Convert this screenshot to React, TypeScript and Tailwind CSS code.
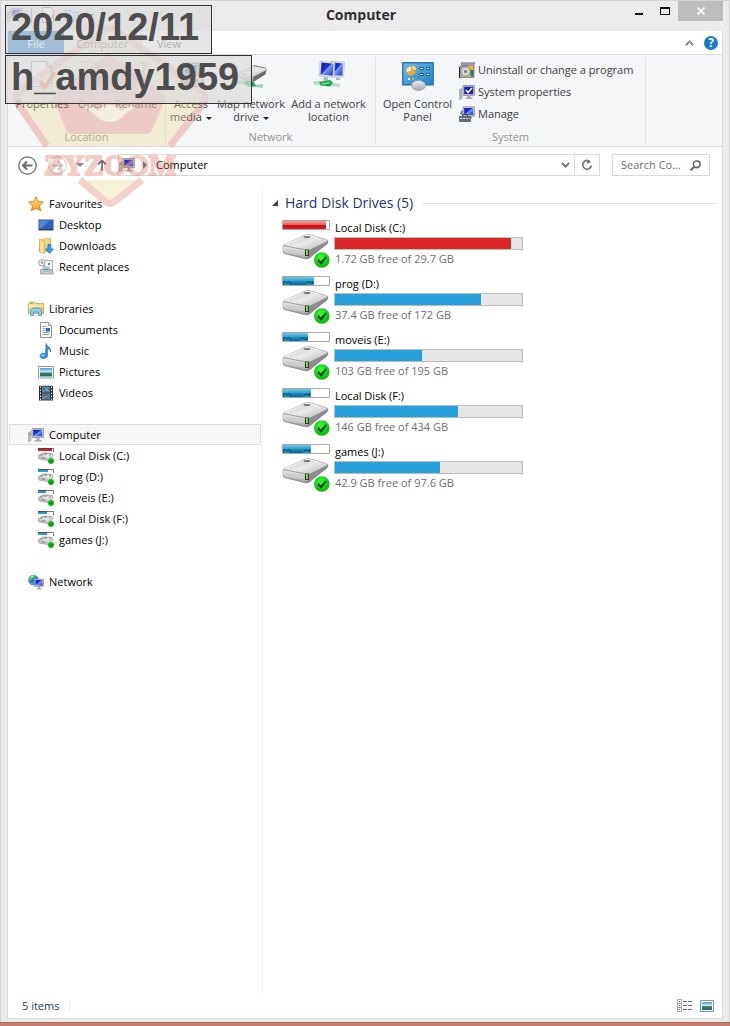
import type { ReactNode } from 'react'
import { useState } from 'react'

type Drive = { name: string; free: string; used: number; cap: number; full?: boolean }

const drives: Drive[] = [
  { name: 'Local Disk (C:)', free: '1.72 GB free of 29.7 GB', used: 94, cap: 43, full: true },
  { name: 'prog (D:)', free: '37.4 GB free of 172 GB', used: 78, cap: 31 },
  { name: 'moveis (E:)', free: '103 GB free of 195 GB', used: 46.5, cap: 25 },
  { name: 'Local Disk (F:)', free: '146 GB free of 434 GB', used: 66, cap: 28 },
  { name: 'games (J:)', free: '42.9 GB free of 97.6 GB', used: 56, cap: 28 },
]

// Shared gradients
const Gradients = () => (
  <svg className="absolute h-0 w-0" aria-hidden="true">
    <defs>
      <linearGradient id="screen" x1="0" y1="0" x2="1" y2="1">
        <stop offset="0" stopColor="#0a12a8" />
        <stop offset="0.45" stopColor="#1c34d8" />
        <stop offset="0.5" stopColor="#7f9cf4" />
        <stop offset="1" stopColor="#1a2cc8" />
      </linearGradient>
      <linearGradient id="metal" x1="0" y1="0" x2="0" y2="1">
        <stop offset="0" stopColor="#f4f4f4" />
        <stop offset="1" stopColor="#a2a2a4" />
      </linearGradient>
      <linearGradient id="metalTop" x1="0" y1="0" x2="1" y2="1">
        <stop offset="0" stopColor="#b9b9bb" />
        <stop offset="0.5" stopColor="#e9e9ea" />
        <stop offset="1" stopColor="#b4b4b6" />
      </linearGradient>
      <linearGradient id="redCap" x1="0" y1="0" x2="0" y2="1">
        <stop offset="0" stopColor="#f79a9a" />
        <stop offset="0.45" stopColor="#f06060" />
        <stop offset="0.5" stopColor="#cf0a12" />
        <stop offset="1" stopColor="#e01c20" />
      </linearGradient>
      <linearGradient id="blueCap" x1="0" y1="0" x2="0" y2="1">
        <stop offset="0" stopColor="#6cc4de" />
        <stop offset="0.45" stopColor="#35a8cc" />
        <stop offset="0.5" stopColor="#0d84b0" />
        <stop offset="1" stopColor="#1a9cc4" />
      </linearGradient>
      <linearGradient id="folder" x1="0" y1="0" x2="1" y2="1">
        <stop offset="0" stopColor="#fbeeb0" />
        <stop offset="1" stopColor="#e3bd58" />
      </linearGradient>
      <linearGradient id="star" x1="0" y1="0" x2="0" y2="1">
        <stop offset="0" stopColor="#ffe98a" />
        <stop offset="1" stopColor="#f79a1c" />
      </linearGradient>
      <linearGradient id="sky" x1="0" y1="0" x2="0" y2="1">
        <stop offset="0" stopColor="#3f9be0" />
        <stop offset="0.5" stopColor="#dff1fb" />
        <stop offset="0.55" stopColor="#3d8a58" />
        <stop offset="1" stopColor="#1d5f78" />
      </linearGradient>
      <linearGradient id="panel" x1="0" y1="0" x2="1" y2="1">
        <stop offset="0" stopColor="#6cbcec" />
        <stop offset="1" stopColor="#2380c8" />
      </linearGradient>
      <radialGradient id="tick" cx="0.45" cy="0.35" r="0.65">
        <stop offset="0" stopColor="#3dff3d" />
        <stop offset="1" stopColor="#04b008" />
      </radialGradient>
    </defs>
  </svg>
)

const Icon = ({ size = 16, children }: { size?: number; children: ReactNode }) => (
  <svg width={size} height={size} viewBox={`0 0 ${size} ${size}`} className="shrink-0" aria-hidden="true">
    {children}
  </svg>
)

const ComputerIcon = () => (
  <Icon>
    <path d="M.5 5.500 3 4.500v9l-2.500 1z" fill="#c4c8c4" stroke="#8a908a" strokeWidth=".6" />
    <path d="M1 6.500h1.500v1.500H1z" fill="#35c335" />
    <path d="M4 1.500h11.500v9H4z" fill="#c9cbd0" stroke="#8f939c" strokeWidth=".8" />
    <path d="M5.200 2.800h9v6.400h-9z" fill="url(#screen)" />
    <path d="M8.500 11h3v2h-3zM6.500 13h7v1.500h-7z" fill="#a9abb0" />
  </Icon>
)

const NetworkIcon = () => (
  <Icon>
    <circle cx="5.500" cy="6" r="5.200" fill="#2b7fd0" />
    <path d="M1.500 3C3 .8 6 .6 8 1.500 7 3 6.500 4 4.500 4.200 3.500 5.500 3 6.500 1 6zM2 8.500l3 .5v2z" fill="#62cf4a" />
    <path d="M3 2.500c1-.8 2-.9 3-.7L4 3.500z" fill="#d5f6d8" />
    <path d="M6.500 5h9v7.500h-9z" fill="#c9cbd0" stroke="#7f8596" strokeWidth=".6" />
    <path d="M7.500 6h7v5.500h-7z" fill="url(#screen)" />
    <path d="M10 12.500h2v2h-2zM8.500 14.300h5v1.200h-5z" fill="#a9abb0" />
  </Icon>
)

const StarIcon = () => (
  <Icon>
    <path d="m8 .8 2.200 4.700 5.200.6-3.900 3.500 1.100 5.200L8 12.200l-4.600 2.600 1.100-5.200L.6 6.100l5.200-.6z" fill="url(#star)" stroke="#e2761a" strokeWidth=".9" />
  </Icon>
)

const DesktopIcon = () => (
  <Icon>
    <path d="M.5 2.500h15v11H.5z" fill="#3b5c8c" stroke="#9aa7b8" />
    <path d="M1.500 3.500h13v8h-13z" fill="#2f62be" />
    <path d="M1.500 3.500H12L3 11.500H1.500z" fill="#4c86de" />
    <path d="M1.500 12h13v1h-13z" fill="#27405f" />
  </Icon>
)

const DownloadsIcon = () => (
  <Icon>
    <path d="M1.500 1.500 7 .8h5.500v13H1.500z" fill="url(#folder)" stroke="#c9a548" strokeWidth=".7" />
    <path d="m1.500 1.500 5 1.500v12.500l-5-1.700z" fill="#f6df92" stroke="#c9a548" strokeWidth=".6" />
    <path d="M10 6.500h3v4.500h2.500l-4 4.500-4-4.500H10z" fill="#3b9fe6" stroke="#1a68b4" strokeWidth=".7" />
  </Icon>
)

const RecentIcon = () => (
  <Icon>
    <path d="M6.500 1.500h8v10h-8z" fill="#f4f7fa" stroke="#8b95a0" strokeWidth=".7" />
    <path d="M2.500 10.500h11l2 4.500h-13z" fill="#c5c9ce" stroke="#8b8f96" strokeWidth=".7" />
    <path d="M5 8h6v4H5z" fill="#dfe9f2" stroke="#7d93a8" strokeWidth=".7" />
    <path d="M10 4h2v2h-2z" fill="#3a8de0" />
    <path d="M6 9.500h4v1.500H6z" fill="#3aa6b4" />
    <circle cx="3.800" cy="3.800" r="3.200" fill="#f0f2f4" stroke="#8f959c" strokeWidth=".9" />
    <path d="M3.800 2v2h1.700" stroke="#55606c" strokeWidth=".8" fill="none" />
  </Icon>
)

const LibrariesIcon = () => (
  <Icon>
    <path d="M.5 2.500 1.500 1h5l1 1.500h8v10H.5z" fill="url(#folder)" stroke="#c4a046" strokeWidth=".8" />
    <path d="M2 1.800h3v1H2z" fill="#3fbf3f" />
    <path d="M.8 5h14.400" stroke="#fff6d0" />
    <path d="M2.500 14.500v-5l2-2.500h7l2 2.500v5h-3v-3.500h-5v3.500z" fill="#8fcdf0" stroke="#3f93c8" strokeWidth=".8" />
  </Icon>
)

const DocumentIcon = () => (
  <Icon>
    <path d="M2.500.5h8l3 3v12h-11z" fill="#fdfdfd" stroke="#8b9096" />
    <path d="M10.500.5v3h3" fill="#dde2e8" stroke="#8b9096" strokeWidth=".8" />
    <path d="M4.500 4.500h4M4.500 6.500h3M4.500 8.500h3M4.500 10.500h7M4.500 12.500h7" stroke="#8ca0c0" />
    <path d="M8 6h4v3.500H8z" fill="#2d6cc8" />
  </Icon>
)

const MusicIcon = () => (
  <Icon>
    <path d="M8 .5c.5 2.800 5.500 3.500 4.500 8.500-.4-2-1.500-3-3-3.300V12.500c0 2-2 3-4 3s-3.500-.9-3.500-2.500 1.700-2.700 3.500-2.700c.9 0 1.500.2 2 .5z" fill="#2d96dc" stroke="#1767ab" strokeWidth=".6" />
    <ellipse cx="4.800" cy="12.400" rx="1.700" ry="1" fill="#9ad6f7" />
  </Icon>
)

const PictureIcon = () => (
  <Icon>
    <path d="M.5 2.500h15v11.500H.5z" fill="#fff" stroke="#8c97a3" />
    <path d="M2 4h12v8.500H2z" fill="url(#sky)" />
  </Icon>
)

const VideoIcon = () => (
  <Icon>
    <path d="M1 .8h14v14.700H1z" fill="#2b2f34" />
    <path d="M4 1.500h8v6H4zM4 8.500h8v6H4z" fill="#3f8fc0" />
    <path d="m5 2 3 2.500L11 2v4.500H6zM5 10l3-1.500 3.500 3L8 14z" fill="#9a4a34" />
    <path d="M6 5.500 9 3l2 3zM6 13l2-2.500 2 1z" fill="#56b8e8" />
    <path d="M2.500 1.500v14M13.500 1.500v14" stroke="#e8ecef" strokeDasharray="1.500 1.500" />
  </Icon>
)

const SmallDriveIcon = ({ full, cap }: { full?: boolean; cap: number }) => (
  <Icon>
    <path d="M0 0h16v3H0z" fill="#fff" />
    <path d={`M0 0h${Math.round(cap / 3)}v3H0z`} fill={full ? '#d8222a' : '#2a9cc8'} />
    <path d="M0 .5h15.500V4" stroke="#3a3a3a" strokeOpacity=".7" fill="none" />
    <path d="m0 8 5-3 9 .5 1 2-4.500 5L1 11z" fill="url(#metalTop)" stroke="#77777a" strokeWidth=".6" />
    <path d="m0 8.200 9.500 1.500v3L1 11z" fill="#bdbdc0" />
    <path d="M2.500 7h2M6 6h3M4 10h3M11 7h2" stroke="#6f6f74" strokeWidth=".8" />
    <circle cx="13" cy="13" r="3" fill="#10bb14" />
    <path d="m11.700 13 1 1.100 1.700-2" stroke="#064d08" strokeWidth=".8" fill="none" />
  </Icon>
)

const DriveIcon = ({ full, cap }: { full?: boolean; cap: number }) => (
  <Icon size={48}>
    <path d="M.5.5h47v9H.5z" fill="#fff" stroke="#a8a8a8" />
    <path d={`M1 1h${cap}v8H1z`} fill={full ? 'url(#redCap)' : 'url(#blueCap)'} />
    {!full && <path d={`M1.500 8V5.500h2l1 2 3-2 1 3M${cap - 6} 8l1-2.500 3 2 1.500-2V8M9 8h${cap - 16}`} stroke="#0a4488" fill="none" />}
    <path d="M1 26 24 15.500q2-1 4-.5l17 5q2 .6 1 3L28 38q-2 1.500-5 1L3 34q-2-.5-2-2z" fill="#88888c" />
    <path d="M1 25.500 23 15q2.500-1 5-.3l16.500 4.800q2 .8.200 2.200L27 30.500z" fill="url(#metalTop)" stroke="#909094" strokeWidth=".5" />
    <path d="M3 25 24 15.800q2-.7 4-.2l8 2.400" stroke="#fafafa" strokeWidth=".9" fill="none" />
    <path d="M1 25.700 26.500 30.500 26 37.600q-1.500 1-3.500.5L3 33.500q-2-.5-2-2.500z" fill="url(#metal)" stroke="#8d8d91" strokeWidth=".5" />
    <path d="m27 30.500 18.500-9q.8 1.500-.5 3L28.500 36.500q-1 .9-2.500 1z" fill="#8b8b90" />
    <path d="m4 28.500 17 3.800v3L4 31.500z" fill="#cfcfd2" />
    <ellipse cx="25" cy="17" rx="3.500" ry="1.100" fill="#77777b" />
    <path d="M23 29.500h4V36h-4z" fill="#333" />
    <path d="M24 30h2v5h-2z" fill="#62ea1e" />
    <circle cx="39.800" cy="40" r="7.800" fill="url(#tick)" />
    <path d="m36 40 3 3.200 5-6" stroke="#073b08" strokeWidth="2" fill="none" />
  </Icon>
)

const PropertiesIcon = () => (
  <Icon size={32}>
    <path d="M5.500 2.500h15l5 5v20h-20z" fill="#fff" stroke="#8f8f8f" />
    <path d="M20.500 2.500v5h5" fill="#eee" stroke="#8f8f8f" />
    <path d="m14 22 5 6L29 13" stroke="#f0662a" strokeWidth="4" fill="none" />
  </Icon>
)

const OpenIcon = () => (
  <Icon size={32}>
    <path d="M5.500 2.500h12l5 5v20h-17z" fill="#f6f6f6" stroke="#9c9c9c" />
    <path d="M5 28V14h6l2 2h12v12z" fill="#c9c9c9" stroke="#a5a5a5" />
    <path d="m22 14 6 6h-3.500v6h-5v-6H16z" fill="#8e8e8e" />
  </Icon>
)

const RenameIcon = () => (
  <Icon size={32}>
    <path d="M2.500 11.500h20v9h-20z" fill="#f3f3f3" stroke="#9c9c9c" />
    <path d="M5 14h9v4H5z" fill="#b5b5b5" />
    <path d="M20 4q4 0 4 3v17q0 3-4 3M28 4q-4 0-4 3v17q0 3 4 3" stroke="#7e7e7e" strokeWidth="1.500" fill="none" />
  </Icon>
)

const AccessMediaIcon = () => (
  <Icon size={32}>
    <path d="M8 4h16v12H8z" fill="#b8bcc2" stroke="#777" />
    <path d="M10 6h12v8H10z" fill="#3470b8" />
    <path d="M13 7h3v3h-3zM18 9h3v3h-3z" fill="#5fc0e8" />
    <path d="M5 20q0-5 8-5h9l-4 5q-6 0-7 3l7 1v4l-9-1q-4-2-4-7z" fill="#a9abae" stroke="#7a7c80" />
    <circle cx="22" cy="22" r="6" fill="#d5d7da" stroke="#888" />
    <circle cx="22" cy="22" r="2" fill="#888" />
  </Icon>
)

const MapDriveIcon = () => (
  <Icon size={32}>
    <path d="m4 14 13-7q2-1 4-.5l9 2q2 1 1.500 3l-1 4L18 23 6 20q-2-1-2-3z" fill="#6e6e72" />
    <path d="m4 13.500 13-7 14 3q1 .8-.5 2L18 18z" fill="url(#metalTop)" />
    <path d="m4 14 14 4v4.500L6 20q-2-1-2-3z" fill="url(#metal)" />
    <path d="M15 18.500h2v3h-2z" fill="#48d21e" />
    <path d="m1 22 8-1 10 5 9-1v4l-9-1-10-3-8 1z" fill="#9fcfb4" />
    <path d="m10 22 8 0 3 5-7 1-5-3z" fill="#18a458" />
  </Icon>
)

const AddLocationIcon = () => (
  <Icon size={32}>
    <path d="m17 2 14.500 1-1 15-13.500 0z" fill="#e2e4e8" stroke="#b4b8c2" strokeWidth=".6" />
    <path d="m19 3.500 11 1-.8 12-10.200 0z" fill="url(#screen)" />
    <path d="m7 2 15 1.500-1 15-15-1.500z" fill="#e2e4e8" stroke="#b4b8c2" strokeWidth=".6" />
    <path d="m8.500 3.500 12 1.200-.8 12L7.500 15.500z" fill="url(#screen)" />
    <path d="m11 18 4 .5v3h-5zM23 18.500h4v2.500h-4z" fill="#b2b6be" />
    <path d="M0 22q8-1 14 1l13 2v3q-8 0-14-2L1 26z" fill="#bcdcc8" />
    <path d="m6 23 11-2 3 3-3 3.500-9-1z" fill="#14a344" />
    <path d="m8 24 8-1 2 1-8 2z" fill="#6fdc90" />
  </Icon>
)

const ControlPanelIcon = () => (
  <Icon size={32}>
    <path d="M.8 3.800h30.400v22H.8z" fill="url(#panel)" stroke="#2b74ac" strokeWidth="1.400" />
    <circle cx="9" cy="12" r="4.500" fill="#f6a52c" />
    <path d="M9 12V7.500A4.500 4.500 0 0 0 4.600 13z" fill="#f7f0dc" />
    <path d="M10 11V6.500a4.500 4.500 0 0 1 4.500 4.500z" fill="#ffe0a0" stroke="#e77f12" strokeWidth=".6" />
    <path d="M17.500 8.500h4v2h-4zM24.500 8.500h3v2h-3zM17.500 14.500h4v2h-4zM24.500 14.500h3v2h-3z" fill="#fff" stroke="#14609c" />
    <path d="M6 19h2v2H6z" fill="#fff" />
    <path d="M10 19h2v2h-2z" fill="#f4a22a" />
    <ellipse cx="16.500" cy="26.500" rx="7" ry="5" fill="url(#metal)" stroke="#8d9196" strokeWidth=".6" />
  </Icon>
)

const UninstallIcon = () => (
  <Icon>
    <path d="M2 .8h14l-1 2.700H3z" fill="#9a9cc8" stroke="#6c6e94" strokeWidth=".6" />
    <path d="M1 4h14v11.500H1z" fill="#b9b6a4" stroke="#666" strokeWidth=".7" />
    <path d="M9 3.500h5v4H9z" fill="#f0b830" />
    <path d="M11.500 8h3v6.500h-3z" fill="#2f7a48" />
    <circle cx="6.500" cy="9.500" r="4.700" fill="#d5d7d3" stroke="#777c75" strokeWidth=".8" />
    <circle cx="6.500" cy="9.500" r="1.500" fill="#70766e" />
    <path d="M.5 5v11" stroke="#222" />
  </Icon>
)

const SystemIcon = () => (
  <Icon>
    <path d="M.5 5.500 3 4.500v10l-2.500 1z" fill="#c4c8c4" stroke="#8a908a" strokeWidth=".6" />
    <path d="M1 6.500h1.500v6H1z" fill="#8fc38f" />
    <path d="M4 1.500h11.500v10H4z" fill="#c9cbd0" stroke="#8f939c" strokeWidth=".8" />
    <path d="M5.200 2.700h9v7.500h-9z" fill="#1220c4" />
    <path d="m7 6 2 2.500 4-4.500" stroke="#fff" strokeWidth="1.500" fill="none" />
    <path d="M8.500 12h3v1.500h-3zM6.500 13.500h7V15h-7z" fill="#a9abb0" />
  </Icon>
)

const ManageIcon = () => (
  <Icon>
    <path d="M4 .8h11.500v9.500H4z" fill="#c9cbd0" stroke="#8f939c" strokeWidth=".8" />
    <path d="M5.200 2h9v7h-9z" fill="url(#screen)" />
    <path d="M10 10.500h3v2h-3z" fill="#999ca3" />
    <path d="M.5 10.500h11v5H.5z" fill="#5e7078" stroke="#36444a" strokeWidth=".6" />
    <path d="M3.500 10.500V8.500h5v2" stroke="#36444a" fill="none" />
    <path d="M1 12.500h10" stroke="#cfd8dc" strokeDasharray="2 1" />
    <path d="M1.500 6 3.500 4v4.500h-2z" fill="#5a6a8c" />
  </Icon>
)

const Caret = () => <span className="ml-1 inline-block border-x-3 border-t-3 border-x-transparent border-t-[#222] align-middle" />

const BigButton = ({ icon, lines, menu, muted, className }: { icon: ReactNode; lines: string[]; menu?: boolean; muted?: boolean; className: string }) => (
  <button type="button" className={`flex shrink-0 flex-col items-center whitespace-nowrap text-[11px] leading-[13px] ${muted ? 'text-[#8c8c8c]' : 'text-[#3c3c3c]'} ${className}`}>
    <span className={`mb-1.5 ${muted ? 'opacity-50' : ''}`}>{icon}</span>
    {lines.map((line, i) => (
      <span key={line}>
        {line}
        {menu && i === lines.length - 1 && <Caret />}
      </span>
    ))}
  </button>
)

const RibbonGroup = ({ label, className, children }: { label: string; className: string; children: ReactNode }) => (
  <section className={`flex shrink-0 flex-col ${className}`}>
    <div className="flex flex-1 pt-1">{children}</div>
    <div className="pb-px text-center text-[11px] leading-4 text-[#929292]">{label}</div>
  </section>
)

const Divider = () => <div className="my-0.5 w-px shrink-0 bg-[#e2e3e4]" />

const systemTools = [
  { icon: <UninstallIcon />, label: 'Uninstall or change a program' },
  { icon: <SystemIcon />, label: 'System properties' },
  { icon: <ManageIcon />, label: 'Manage' },
]

const Ribbon = () => (
  <div className="flex h-[93px] overflow-hidden border-y border-[#dadbdc] bg-[#f5f6f7]">
    <RibbonGroup label="Location" className="w-[157px]">
      <BigButton icon={<PropertiesIcon />} lines={['Properties']} className="w-[68px]" />
      <BigButton icon={<OpenIcon />} lines={['Open']} muted className="w-8" />
      <BigButton icon={<RenameIcon />} lines={['Rename']} muted className="w-14" />
    </RibbonGroup>
    <Divider />
    <RibbonGroup label="Network" className="w-[209px]">
      <BigButton icon={<AccessMediaIcon />} lines={['Access', 'media']} menu className="w-[50px]" />
      <BigButton icon={<MapDriveIcon />} lines={['Map network', 'drive']} menu className="w-[70px]" />
      <BigButton icon={<AddLocationIcon />} lines={['Add a network', 'location']} className="w-[85px]" />
    </RibbonGroup>
    <Divider />
    <RibbonGroup label="System" className="w-[269px]">
      <BigButton icon={<ControlPanelIcon />} lines={['Open Control', 'Panel']} className="w-[83px]" />
      <div className="flex flex-col">
        {systemTools.map(tool => (
          <button key={tool.label} type="button" className="flex h-[22px] items-center gap-[3px] whitespace-nowrap text-[11px] text-[#3c3c3c]">
            {tool.icon}
            {tool.label}
          </button>
        ))}
      </div>
    </RibbonGroup>
    <Divider />
  </div>
)

const TitleBar = () => (
  <header className="grid h-[30px] grid-cols-[1fr_auto_1fr] items-start">
    <div className="flex items-center gap-2 pt-1.5">
      <ComputerIcon />
      <span className="h-4 w-px bg-[#999]" />
      <Icon>
        <path d="M2.500.5h8l3 3v12h-11z" fill="#fff" stroke="#888" />
        <path d="m6 11 3 3 5-7" stroke="#f0662a" strokeWidth="2" fill="none" />
      </Icon>
      <Icon>
        <path d="M1.500 3.500h6l1 1.500h6v9h-13z" fill="#bcd6f2" stroke="#7fa6d2" />
      </Icon>
      <span className="border-x-3 border-t-3 border-x-transparent border-t-[#333]" />
      <span className="h-4 w-px bg-[#999]" />
    </div>
    <h1 className="pt-1 pr-2 text-sm leading-5 font-bold text-[#2e2e2e]">Computer</h1>
    <div className="flex justify-end">
      <button type="button" aria-label="Minimise" className="flex h-5 w-[27px] items-center justify-center">
        <span className="mt-1.5 h-0.5 w-2 bg-[#111]" />
      </button>
      <button type="button" aria-label="Maximise" className="flex h-5 w-[26px] items-center justify-center">
        <span className="h-2 w-2.5 border border-t-2 border-[#111]" />
      </button>
      <button type="button" aria-label="Close" className="flex h-5 w-[45px] items-center justify-center bg-[#bcbcbc]">
        <svg width="8" height="8" viewBox="0 0 8 8" stroke="#fff" strokeWidth="1.700">
          <path d="m.5.5 7 7m0-7-7 7" />
        </svg>
      </button>
    </div>
  </header>
)

const Tabs = () => (
  <div className="flex h-[23px] items-stretch bg-white text-[11px]">
    <button type="button" className="w-14 bg-[#1979ca] pt-[3px] text-white">File</button>
    <button type="button" className="w-[78px] border-r border-[#dadbdc] bg-[#f5f6f7] pt-[3px] text-[#444]">Computer</button>
    <button type="button" className="w-[54px] pt-[3px] text-[#444]">View</button>
    <div className="ml-auto flex items-center gap-2.5 pr-1">
      <button type="button" aria-label="Minimise the ribbon">
        <svg width="9" height="6" viewBox="0 0 9 6" fill="none" stroke="#8b8b8b" strokeWidth="2">
          <path d="M.8 5.200 4.500 1.500l3.700 3.700" />
        </svg>
      </button>
      <button type="button" aria-label="Help" className="h-3.5 w-3.5 rounded-full bg-[#1979ca] text-xs leading-3.5 font-bold text-white">?</button>
    </div>
  </div>
)

const AddressRow = () => (
  <div className="flex items-center pt-[7px] pr-3 pl-2.5">
    <button type="button" aria-label="Back" className="w-[30px]">
      <svg width="19" height="19" viewBox="0 0 19 19" fill="none" stroke="#6a6a6a">
        <circle cx="9.500" cy="9.500" r="8.700" strokeWidth="1.300" />
        <path d="M14.500 9.500H5.500M9 5.500l-4 4 4 4" strokeWidth="2" />
      </svg>
    </button>
    <button type="button" aria-label="Forward" className="w-7">
      <svg width="19" height="19" viewBox="0 0 19 19" fill="none" stroke="#c2c2c2">
        <circle cx="9.500" cy="9.500" r="8.700" />
        <path d="M4.500 9.500h9M10 5.500l4 4-4 4" strokeWidth="2" />
      </svg>
    </button>
    <button type="button" aria-label="Recent locations" className="w-[21px]">
      <span className="block w-0 border-x-4 border-t-4 border-x-transparent border-t-[#8a8a8a]" />
    </button>
    <button type="button" aria-label="Up" className="w-[21px]">
      <svg width="10" height="12" viewBox="0 0 10 12" fill="none" stroke="#6a6a6a" strokeWidth="1.700">
        <path d="M5 12V1.500M1 5.500l4-4 4 4" />
      </svg>
    </button>
    <div className="flex h-[22px] min-w-0 flex-1 items-center border border-[#d9d9d9] text-[11px]">
      <ComputerIcon />
      <span className="mr-[9px] ml-2 h-0 w-0 border-y-4 border-l-4 border-y-transparent border-l-[#6a6a6a]" />
      <span className="flex-1 leading-5 text-black">Computer</span>
      <button type="button" aria-label="Previous locations" className="px-1">
        <svg width="9" height="6" viewBox="0 0 9 6" fill="none" stroke="#666" strokeWidth="1.800">
          <path d="m1 1 3.500 3.700L8 1" />
        </svg>
      </button>
      <button type="button" aria-label="Refresh" className="flex h-full w-[25px] items-center justify-center border-l border-[#d9d9d9]">
        <svg width="12" height="12" viewBox="0 0 12 12" fill="none" stroke="#777" strokeWidth="1.700">
          <path d="M8.500 2.300A4.300 4.300 0 1 0 10.300 6.500" />
          <path d="M6.500.2 10 3.200 6 5z" fill="#777" stroke="none" />
        </svg>
      </button>
    </div>
    <label className="ml-3 flex h-[22px] w-[98px] items-center border border-[#d9d9d9] pr-2 pl-2 text-[11px]">
      <input aria-label="Search Computer" placeholder="Search Co..." className="min-w-0 flex-1 placeholder:text-[#6d6d6d] focus:outline-none" />
      <svg width="11" height="11" viewBox="0 0 11 11" fill="none" stroke="#666" strokeWidth="1.600">
        <circle cx="6.700" cy="4.300" r="3.300" />
        <path d="M4.200 6.800.6 10.400" strokeWidth="2" />
      </svg>
    </label>
  </div>
)

type NavItem = { label: string; icon: ReactNode }
const navGroups: { head: NavItem; items: NavItem[] }[] = [
  {
    head: { label: 'Favourites', icon: <StarIcon /> },
    items: [
      { label: 'Desktop', icon: <DesktopIcon /> },
      { label: 'Downloads', icon: <DownloadsIcon /> },
      { label: 'Recent places', icon: <RecentIcon /> },
    ],
  },
  {
    head: { label: 'Libraries', icon: <LibrariesIcon /> },
    items: [
      { label: 'Documents', icon: <DocumentIcon /> },
      { label: 'Music', icon: <MusicIcon /> },
      { label: 'Pictures', icon: <PictureIcon /> },
      { label: 'Videos', icon: <VideoIcon /> },
    ],
  },
  {
    head: { label: 'Computer', icon: <ComputerIcon /> },
    items: drives.map(d => ({ label: d.name, icon: <SmallDriveIcon full={d.full} cap={d.cap} /> })),
  },
  { head: { label: 'Network', icon: <NetworkIcon /> }, items: [] },
]

const NavPane = () => {
  const [selected, setSelected] = useState('Computer')
  const row = (item: NavItem, indent: string) => (
    <button
      key={item.label}
      type="button"
      onClick={() => setSelected(item.label)}
      className={`flex h-[21px] w-full items-center gap-[5px] border text-[11px] text-black ${indent} ${selected === item.label ? 'border-[#dedede] bg-[#f7f7f7]' : 'border-transparent'}`}
    >
      {item.icon}
      <span className="pt-px">{item.label}</span>
    </button>
  )
  return (
    <nav className="flex w-[255px] shrink-0 flex-col gap-[21px] border-r border-[#f2f2f2] pt-2 pr-px pl-px">
      {navGroups.map(group => (
        <div key={group.head.label}>
          {row(group.head, 'pl-[18px]')}
          {group.items.map(item => row(item, 'pl-7'))}
        </div>
      ))}
    </nav>
  )
}

const DriveRow = ({ drive }: { drive: Drive }) => (
  <li className="flex h-14 items-start gap-1">
    <DriveIcon full={drive.full} cap={drive.cap} />
    <div className="w-[189px]">
      <div className="pl-px text-[11px] leading-4 text-black">{drive.name}</div>
      <div className="mt-px h-[13px] border border-[#bcbcbc] bg-[#e6e6e6]">
        <div className={`h-full ${drive.full ? 'bg-[#da2626]' : 'bg-[#26a0da]'}`} style={{ width: `${drive.used}%` }} />
      </div>
      <div className="pl-px text-[11px] leading-[17px] text-[#6d6d6d]">{drive.free}</div>
    </div>
  </li>
)

const DriveList = () => (
  <main className="min-w-0 flex-1 pt-2 pr-[7px] pl-[9px]">
    <div className="flex h-5 items-center">
      <svg width="6" height="6" viewBox="0 0 6 6" className="shrink-0">
        <path d="M6 0v6H0z" fill="#404040" />
      </svg>
      <h2 className="ml-[7px] text-sm whitespace-nowrap text-[#1e3287]">Hard Disk Drives (5)</h2>
      <span className="ml-2.5 h-px flex-1 bg-[#e2e2e2]" />
    </div>
    <ul className="mt-[7px] pl-2.5">
      {drives.map(d => (
        <DriveRow key={d.name} drive={d} />
      ))}
    </ul>
  </main>
)

const StatusBar = () => (
  <footer className="flex h-[25px] items-center pr-2 pl-3.5 text-[11px] text-[#1e395b]">
    <span className="pt-0.5">5 items</span>
    <span className="ml-2.5 h-3 w-px bg-[#f0f0f0]" />
    <div className="ml-auto flex items-center gap-2">
      <button type="button" aria-label="Details view">
        <svg width="15" height="13" viewBox="0 0 15 13" fill="none" stroke="#8793a5" strokeWidth=".8">
          <path d="M.5.5h4v4h-4zM.5 4.500h4v4h-4zM.5 8.500h4v4h-4z" />
          <path d="M6 2.500h4M11 2.500h4M6 6.500h4M11 6.500h4M6 10.500h4M11 10.500h4" stroke="#596980" strokeWidth="1" />
          <path d="M2 2h1v1H2zM2 10h1v1H2z" fill="#34506e" stroke="none" />
          <path d="M2 6h1v1H2z" fill="#d02020" stroke="none" />
        </svg>
      </button>
      <button type="button" aria-label="Large icons view">
        <svg width="14" height="12" viewBox="0 0 14 12">
          <path d="M.5.5h13v11H.5z" fill="#fff" stroke="#7e93ab" />
          <path d="M2 2h10v8H2z" fill="url(#sky)" />
        </svg>
      </button>
    </div>
  </footer>
)

const Watermark = () => (
  <svg width="200" height="190" viewBox="10 22 200 190" className="pointer-events-none absolute top-[22px] left-2.5" aria-hidden="true">
    <g opacity=".36">
      <path d="M47 146 18 104q-4-7 1-13L103 31q7-5 14 0l85 60q5 6 1 13l-33 42z" fill="#ead99a" />
      <path d="m78 180 28 25q4 3 8 0l30-25z" fill="#ead99a" />
      <path d="M47 146 18 104q-4-7 1-13L103 31q7-5 14 0l85 60q5 6 1 13l-33 42M80 180l26 22q4 3 8 0l28-22" fill="none" stroke="#e07f70" strokeWidth="7" />
      <path d="m108 54 46 32 12 12-14 32q-2 4-6 4H72q-4 0-6-4L53 98l10-11z" fill="#e07f70" />
      <path d="M83 107q7-3 15 4 4-6 11-6t12 6q8-7 15-4-7 4-11 7-5 7-15 8-11-1-16-8-5-4-11-7z" fill="#efe3b8" />
      <text x="44" y="175" fill="#d9705f" stroke="#d9705f" strokeWidth="2" className="font-['Liberation_Serif',serif] text-[29px] font-bold">ZYZOOM</text>
    </g>
  </svg>
)

const Stamp = ({ children }: { children: ReactNode }) => (
  <div className="h-[49px] w-fit border border-[#333] bg-[#dcdcdc]/70 pr-3 pl-[5px] font-['Liberation_Sans',sans-serif] text-[38px] leading-[43px] font-bold text-[#4d4d4d]">{children}</div>
)

export default function App() {
  return (
    <div className="relative flex min-h-screen flex-col bg-[#ebebeb] font-['Open_Sans',sans-serif]">
      <Gradients />
      <div className="flex flex-1 flex-col border border-b-0 border-[#d2d2d2] px-1.5 pb-[3px]">
        <TitleBar />
        <div className="flex flex-1 flex-col border-r border-b border-l border-[#d9d9d9] bg-white">
          <Tabs />
          <Ribbon />
          <AddressRow />
          <div className="mt-[9px] flex flex-1">
            <NavPane />
            <DriveList />
          </div>
          <StatusBar />
        </div>
      </div>
      <div className="h-1 border-t border-[#b5665c] bg-[#c57b70]" />
      <Watermark />
      <div className="pointer-events-none absolute top-[5px] left-[5px] flex flex-col gap-px">
        <Stamp>2020/12/11</Stamp>
        <Stamp>h_amdy1959</Stamp>
      </div>
    </div>
  )
}
